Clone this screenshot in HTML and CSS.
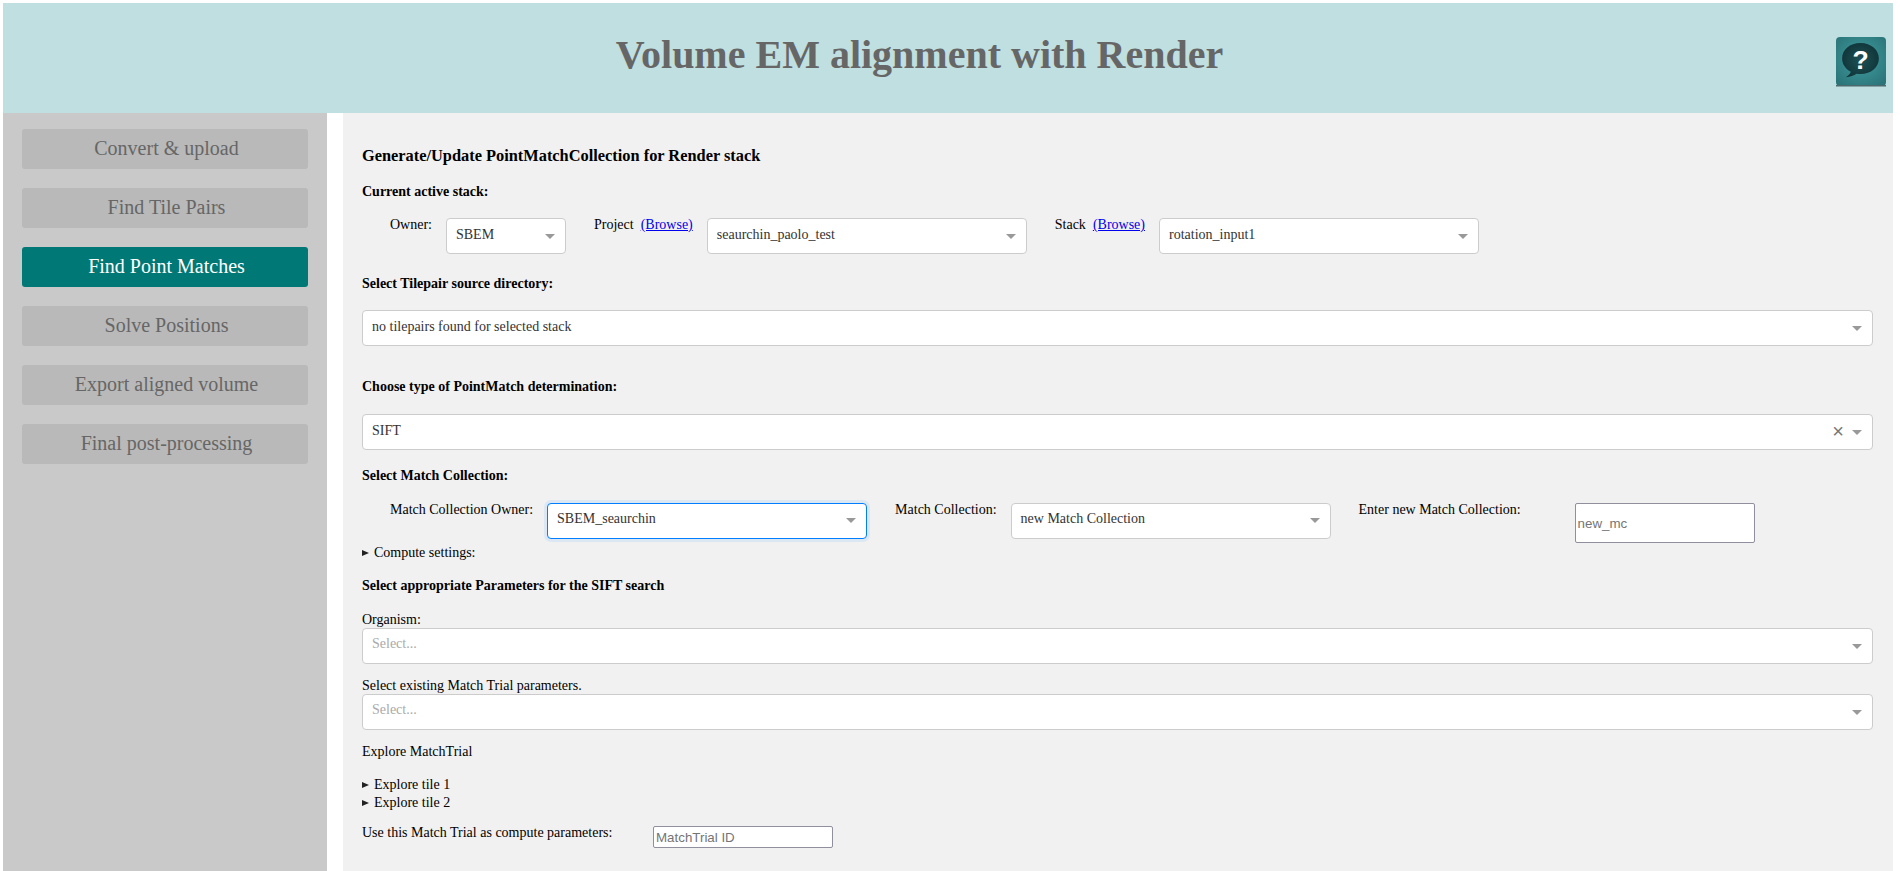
FILE: index.html
```html
<!DOCTYPE html>
<html lang="en">
<head>
    <meta charset="UTF-8">
    <title>Volume EM alignment with Render</title>
    <link rel="stylesheet" href="styles.css">
</head>
<body>
    <header class="top-bar">
        <h1>Volume EM alignment with Render</h1>
        <a class="help-link" href="#" aria-label="Help">
            <svg width="50" height="50" viewBox="0 0 49 50" preserveAspectRatio="none">
                <defs>
                    <radialGradient id="helpBg" cx="0.5" cy="0.45" r="0.7">
                        <stop offset="0" stop-color="#3f9ea1"/>
                        <stop offset="1" stop-color="#2a7276"/>
                    </radialGradient>
                    <radialGradient id="bubbleBg" cx="0.5" cy="0.5" r="0.6">
                        <stop offset="0" stop-color="#1d5155"/>
                        <stop offset="1" stop-color="#0f3236"/>
                    </radialGradient>
                </defs>
                <rect x="0" y="0" width="49" height="49" rx="4" fill="url(#helpBg)"/>
                <rect x="0" y="48" width="49" height="1.500" fill="#4c6a6d"/>
                <path d="M24 6C13.500 6 6 12.700 6 21.500c0 6 3.600 10.600 8.600 13.200-.8 2.300-2.500 4-5 5.600 4.400-.4 8-1.800 10.600-3.500 1.200.2 2.500.3 3.800.3 10.500 0 18-7 18-15.600S34.500 6 24 6z" fill="url(#bubbleBg)"/>
                <text class="help-mark" x="24" y="32" text-anchor="middle">?</text>
            </svg>
        </a>
    </header>
    <div class="page">
        <nav class="side-menu">
            <button class="menu-btn">Convert &amp; upload</button>
            <button class="menu-btn">Find Tile Pairs</button>
            <button class="menu-btn active">Find Point Matches</button>
            <button class="menu-btn">Solve Positions</button>
            <button class="menu-btn">Export aligned volume</button>
            <button class="menu-btn">Final post-processing</button>
        </nav>
        <main class="content">
            <h2>Generate/Update PointMatchCollection for Render stack</h2>
            <h4 class="current-head">Current active stack:</h4>
            <div class="row stack-row">
                <label>Owner:</label>
                <div class="dropdown owner-select"><span>SBEM</span><i class="caret"></i></div>
                <label class="next">Project&nbsp; <a href="#">(Browse)</a></label>
                <div class="dropdown wide"><span>seaurchin_paolo_test</span><i class="caret"></i></div>
                <label class="next">Stack&nbsp; <a href="#">(Browse)</a></label>
                <div class="dropdown wide"><span>rotation_input1</span><i class="caret"></i></div>
            </div>
            <h4 class="tilepair-head">Select Tilepair source directory:</h4>
            <div class="dropdown full tilepair-select"><span>no tilepairs found for selected stack</span><i class="caret"></i></div>
            <h4 class="type-head">Choose type of PointMatch determination:</h4>
            <div class="dropdown full type-select"><span>SIFT</span><b class="clear">×</b><i class="caret"></i></div>
            <h4 class="match-head">Select Match Collection:</h4>
            <div class="row match-row">
                <label>Match Collection Owner:</label>
                <div class="dropdown wide focused"><span>SBEM_seaurchin</span><i class="caret"></i></div>
                <label class="next">Match Collection:</label>
                <div class="dropdown wide"><span>new Match Collection</span><i class="caret"></i></div>
                <label class="next new-label">Enter new Match Collection:</label>
                <input class="text-input new-mc" type="text" placeholder="new_mc">
            </div>
            <details class="compute"><summary>Compute settings:</summary></details>
            <h4 class="sift-head">Select appropriate Parameters for the SIFT search</h4>
            <div class="field-label organism-label">Organism:</div>
            <div class="dropdown full"><span class="placeholder">Select...</span><i class="caret"></i></div>
            <div class="field-label trial-label">Select existing Match Trial parameters.</div>
            <div class="dropdown full"><span class="placeholder">Select...</span><i class="caret"></i></div>
            <div class="field-label explore-label">Explore MatchTrial</div>
            <details class="tile-one"><summary>Explore tile 1</summary></details>
            <details class="tile-two"><summary>Explore tile 2</summary></details>
            <div class="row use-row">
                <label class="use-label">Use this Match Trial as compute parameters:</label>
                <input class="text-input trial-id" type="text" placeholder="MatchTrial ID">
            </div>
        </main>
    </div>
</body>
</html>
```

FILE: styles.css
```css
html, body {
    height: 100%;
}
body {
    margin: 0;
    padding: 3px 7px 0 3px;
    box-sizing: border-box;
    background-color: #fff;
    color: #000;
    font-family: 'Liberation Serif', 'Times New Roman', serif;
    font-size: 14px;
    line-height: 16px;
    overflow: hidden;
    display: flex;
    flex-direction: column;
}
.top-bar {
    height: 110px;
    flex: none;
    background-color: #bfdfe0;
    display: flex;
    align-items: center;
    justify-content: center;
    position: relative;
}
.top-bar h1 {
    margin: 0 57px 6px 0;
    color: #666;
    font-size: 40px;
    line-height: 46px;
    font-weight: bold;
}
.help-link {
    position: absolute;
    top: 34px;
    right: 7px;
    display: block;
    height: 50px;
}
.help-mark {
    fill: #fff;
    font-family: 'Liberation Sans', Arial, sans-serif;
    font-size: 26px;
    font-weight: bold;
}
.page {
    flex: 1;
    display: flex;
    min-height: 0;
}
.side-menu {
    width: 324px;
    flex: none;
    box-sizing: border-box;
    padding: 16px 19px;
    background-color: #c9c9c9;
    display: flex;
    flex-direction: column;
    gap: 19px;
}
.menu-btn {
    height: 40px;
    padding: 0 0 2px 3px;
    border: none;
    border-radius: 3px;
    background-color: #b9b9b9;
    color: #666;
    font-family: inherit;
    font-size: 20px;
    cursor: pointer;
}
.menu-btn.active {
    background-color: #007876;
    color: #fff;
}
.content {
    flex: 1;
    margin-left: 16px;
    padding: 33px 20px 0 19px;
    background-color: #f1f1f1;
}
h2 {
    margin: 0;
    font-size: 16.38px;
    line-height: 18px;
}
h4 {
    margin: 0;
    font-size: 14px;
    line-height: 16px;
}
h2, h4, .row label, .field-label, summary {
    padding-top: 1px;
    margin-bottom: -1px;
}
a {
    color: #00e;
}
.row {
    display: flex;
    align-items: flex-start;
}
.row label {
    margin-right: 14px;
}
.row label.next {
    margin-left: 28px;
}
.row .dropdown, .row .text-input {
    margin-top: 2px;
}
.stack-row {
    margin-top: 17px;
    padding-left: 28px;
}
.match-row {
    margin-top: 18px;
    padding-left: 28px;
}
.row label.new-label {
    width: 202px;
    margin-right: 14px;
}

/* select boxes */
.dropdown {
    height: 36px;
    box-sizing: border-box;
    padding: 0 10px 4px 9px;
    display: flex;
    align-items: center;
    background-color: #fff;
    border: 1px solid #ccc;
    border-radius: 4px;
    color: #333;
    flex: none;
}
.dropdown span {
    flex: 1;
    padding-top: 2px;
}
.match-row .dropdown span {
    padding-top: 0;
}
.dropdown .placeholder {
    padding-top: 0;
    color: #aaa;
}
.owner-select {
    width: 120px;
}
.wide {
    width: 320px;
}
.full {
    width: 100%;
}
.focused {
    border-color: #007eff;
    box-shadow: 0 0 0 3px #dbe8f4;
}
.caret {
    width: 0;
    height: 0;
    margin-top: 4px;
    border-style: solid;
    border-width: 5px 5px 0;
    border-color: #999 transparent transparent;
}
.match-row .caret {
    margin-top: 2px;
}
.clear {
    margin: 2px 8px 0 0;
    color: #777;
    font-family: 'Liberation Sans', Arial, sans-serif;
    font-size: 20px;
    font-weight: normal;
}
.text-input {
    width: 180px;
    box-sizing: border-box;
    padding: 2px 2px 1px;
    border: 1px solid #8f8f9d;
    border-radius: 2px;
    background-color: #fff;
    font-family: 'Liberation Sans', Arial, sans-serif;
    font-size: 13.33px;
}
.text-input::placeholder {
    color: #757575;
}
.new-mc {
    height: 40px;
}
.trial-id {
    height: 22px;
}
.row label.use-label {
    width: 291px;
    flex: none;
    margin-right: 0;
}
summary {
    list-style: none;
    display: flex;
    align-items: center;
    gap: 5px;
    cursor: pointer;
}
summary::before {
    content: "";
    border-style: solid;
    border-width: 3.500px 0 3.500px 7px;
    border-color: transparent transparent transparent #222;
}

/* vertical spacing of the form */
.current-head { margin-top: 19px; }
.tilepair-head { margin-top: 21px; }
.tilepair-select { margin-top: 19px; }
.type-head { margin-top: 32px; }
.type-select { margin-top: 20px; }
.match-head { margin-top: 17px; }
.compute { margin-top: 1px; }
.sift-head { margin-top: 17px; }
.organism-label { margin-top: 18px; margin-bottom: 0; }
.trial-label { margin-top: 13px; margin-bottom: 0; }
.explore-label { margin-top: 13px; }
.tile-one { margin-top: 17px; }
.tile-two { margin-top: 2px; }
.use-row { margin-top: 14px; }
```
